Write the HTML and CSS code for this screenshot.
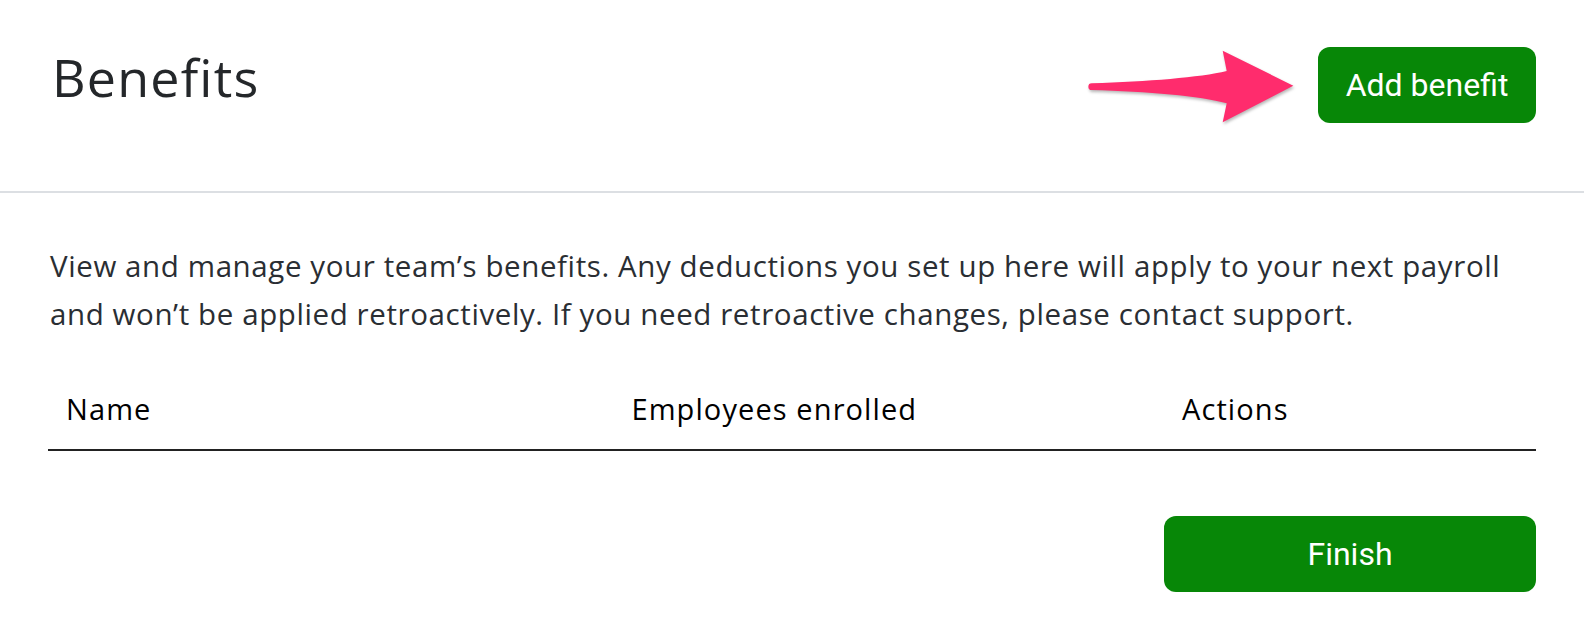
FILE: index.html
```html
<!DOCTYPE html>
<html lang="en">
<head>
<meta charset="utf-8">
<title>Benefits</title>
<link rel="stylesheet" href="styles.css">
</head>
<body>
<div class="page">
  <header class="top">
    <h1 class="title">Benefits</h1>
    <button class="btn btn-add" type="button">Add benefit</button>
    <svg class="arrow" viewBox="0 0 210 80" width="210" height="80" aria-hidden="true">
      <path d="M3.7 37.3 C 60 35.5, 112 31.5, 138.7 25 L 134.7 4.7 L 205.3 39.7 L 134.7 76.3 L 138.7 57.3 C 112 50, 60 45.5, 3.7 44 A 3.35 3.35 0 0 1 3.7 37.3 Z" fill="#ff2c6d"/>
    </svg>
  </header>
  <main class="content">
    <p class="intro">View and manage your team’s benefits. Any deductions you set up here will apply to your next payroll and won’t be applied retroactively. If you need retroactive changes, please contact support.</p>
    <table class="benefits">
      <thead>
        <tr>
          <th class="col-name">Name</th>
          <th class="col-emp">Employees enrolled</th>
          <th class="col-act">Actions</th>
        </tr>
      </thead>
    </table>
    <div class="footer">
      <button class="btn btn-finish" type="button">Finish</button>
    </div>
  </main>
</div>
</body>
</html>
```

FILE: styles.css
```css
html, body {
  margin: 0;
  padding: 0;
  background: #ffffff;
}

body {
  font-family: "Open Sans", "Noto Sans", "Liberation Sans", Arial, sans-serif;
}

.page {
  width: 1584px;
}

.top {
  position: relative;
  box-sizing: border-box;
  height: 193px;
  padding: 47px 48px 0;
  display: flex;
  justify-content: space-between;
  align-items: flex-start;
  border-bottom: 2px solid #dcdfe3;
}

.title {
  margin: 0 0 0 4px;
  font-size: 52px;
  line-height: 60px;
  letter-spacing: 1.2px;
  font-weight: 400;
  color: #24272a;
}

.btn {
  border: none;
  padding: 0;
  background: #078707;
  color: #ffffff;
  font-family: Roboto, "Liberation Sans", Arial, sans-serif;
  font-size: 32px;
  line-height: 76px;
  height: 76px;
  border-radius: 12px;
  cursor: pointer;
}

.btn-add {
  width: 218px;
}

.arrow {
  position: absolute;
  left: 1088px;
  top: 46px;
  filter: drop-shadow(1px 2px 1.5px rgba(0, 0, 0, 0.28));
}

.content {
  padding: 49px 48px 0;
}

.intro {
  margin: 0;
  padding-left: 2px;
  max-width: 1470px;
  font-size: 29.5px;
  line-height: 48px;
  letter-spacing: 0.6px;
  color: #2a2e33;
}

.benefits {
  width: 100%;
  margin-top: 51px;
  border-collapse: collapse;
}

.benefits th {
  text-align: left;
  font-weight: 400;
  font-size: 29px;
  line-height: 40px;
  letter-spacing: 1.1px;
  color: #000000;
  padding: 0 16px 19.5px 18px;
  border-bottom: 2px solid #222222;
}

.col-name { width: 38%; }
.col-emp { width: 37%; }
.col-act { width: 25%; }

.footer {
  margin-top: 65px;
  display: flex;
  justify-content: flex-end;
}

.btn-finish {
  width: 25%;
}
```
